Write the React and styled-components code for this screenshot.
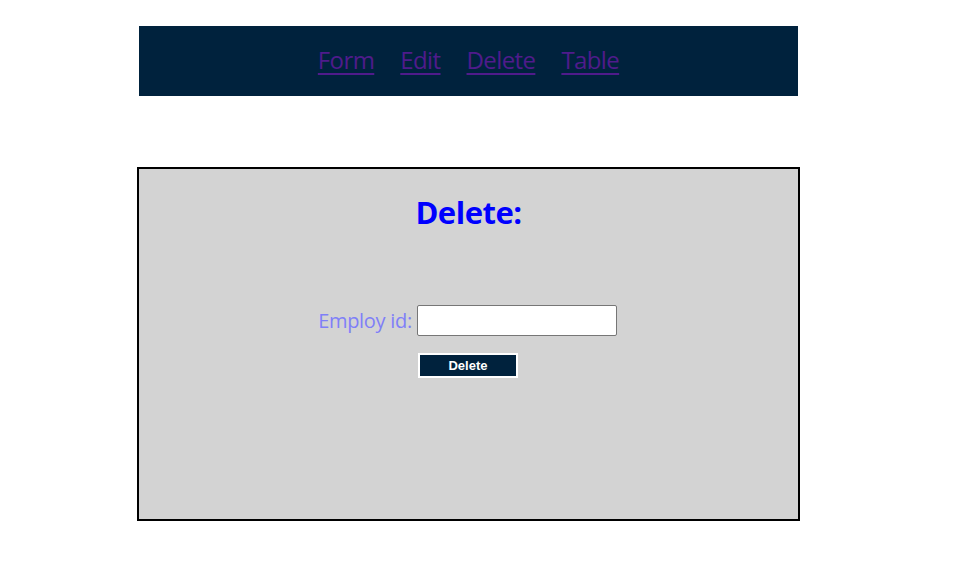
import React from 'react';
import styled, { createGlobalStyle } from 'styled-components';

const GlobalStyle = createGlobalStyle`
  body {
    margin: 0;
    background: #ffffff;
    font-family: "Open Sans", "Noto Sans", sans-serif;
  }
`;

const Page = styled.div`
  width: 976px;
  padding-top: 26px;
`;

const Nav = styled.nav`
  width: 659px;
  height: 70px;
  box-sizing: border-box;
  padding-bottom: 4px;
  margin-left: 139px;
  background: #00223d;
  display: flex;
  align-items: center;
  justify-content: center;
  gap: 26px;
`;

const NavLink = styled.a`
  color: #4f1b8b;
  font-size: 24px;
  text-decoration: underline;
  text-underline-offset: 4px;
  letter-spacing: -0.6px;
  cursor: pointer;
`;

const Panel = styled.div`
  width: 659px;
  height: 350px;
  margin: 71px 0 0 137px;
  border: 2px solid #000;
  background: #d3d3d3;
  display: flex;
  flex-direction: column;
  align-items: center;
`;

const Title = styled.h1`
  margin: 22px 0 0;
  font-size: 31px;
  font-weight: 700;
  color: #0000ff;
  letter-spacing: -0.5px;
`;

const Row = styled.div`
  display: flex;
  align-items: center;
  gap: 5px;
  margin-top: 72px;
  margin-left: -2px;
`;

const Label = styled.label`
  font-size: 20px;
  color: #7f7ff8;
  letter-spacing: -0.3px;
`;

const Input = styled.input`
  width: 200px;
  height: 31px;
  box-sizing: border-box;
  border: 1px solid #767676;
  border-radius: 2px;
  background: #fff;
  padding: 0 4px;
`;

const Button = styled.button`
  width: 100px;
  height: 25px;
  margin-top: 17px;
  margin-left: -1px;
  background: #00223d;
  color: #fff;
  border: 2px solid #fff;
  font-family: "Liberation Sans", Arial, sans-serif;
  font-weight: 700;
  font-size: 13px;
  padding: 0;
`;

export default function App() {
  return (
    <>
      <GlobalStyle />
      <Page>
        <Nav>
          <NavLink>Form</NavLink>
          <NavLink>Edit</NavLink>
          <NavLink>Delete</NavLink>
          <NavLink>Table</NavLink>
        </Nav>
        <Panel>
          <Title>Delete:</Title>
          <Row>
            <Label htmlFor="empid">Employ id:</Label>
            <Input id="empid" type="text" />
          </Row>
          <Button>Delete</Button>
        </Panel>
      </Page>
    </>
  );
}
